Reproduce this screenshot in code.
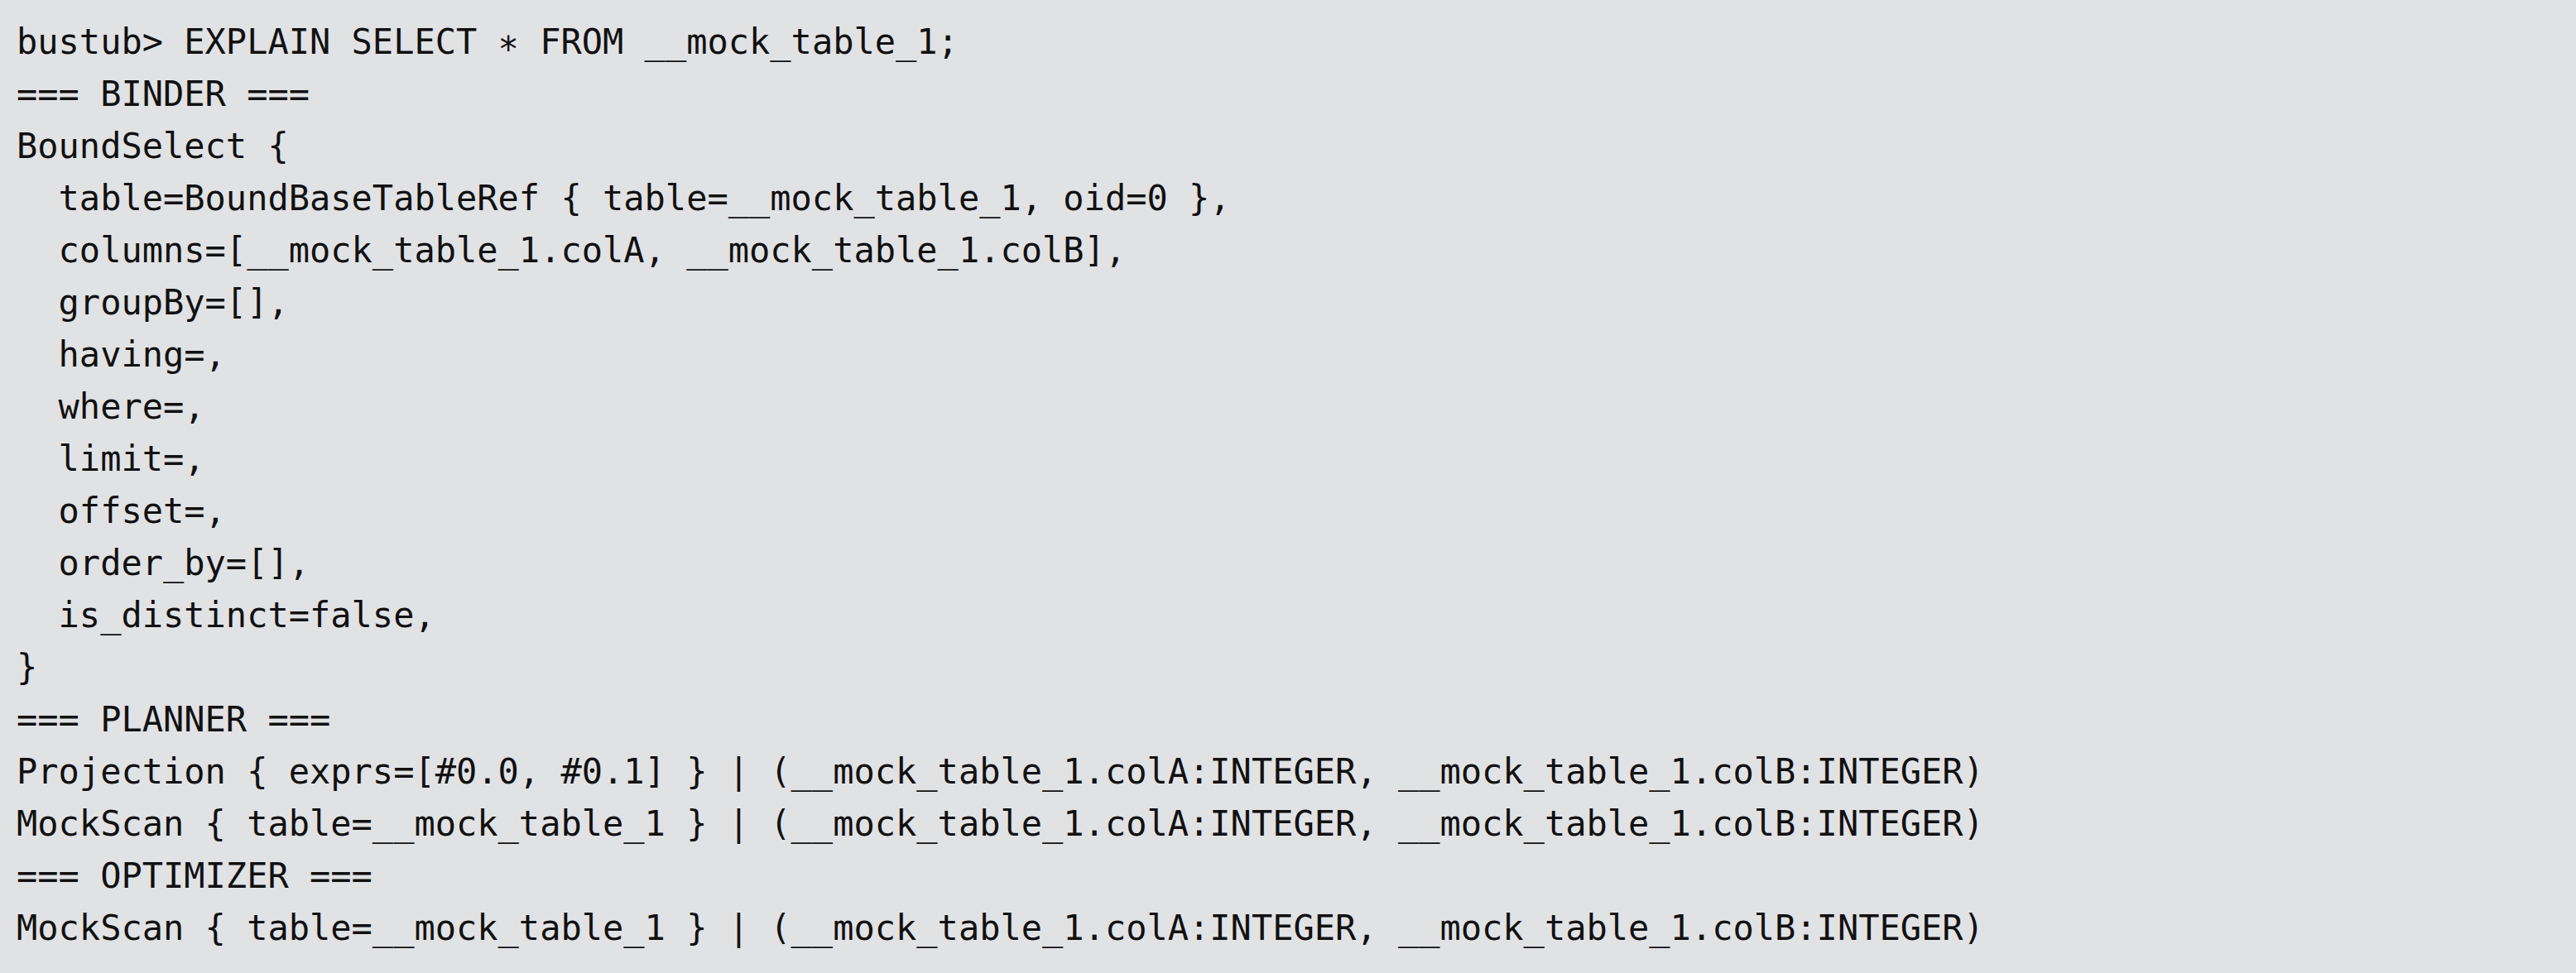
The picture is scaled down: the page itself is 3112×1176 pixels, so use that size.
import React from "react";

const lines = [
  "=== BINDER ===",
  "BoundSelect {",
  "  table=BoundBaseTableRef { table=__mock_table_1, oid=0 },",
  "  columns=[__mock_table_1.colA, __mock_table_1.colB],",
  "  groupBy=[],",
  "  having=,",
  "  where=,",
  "  limit=,",
  "  offset=,",
  "  order_by=[],",
  "  is_distinct=false,",
  "}",
  "=== PLANNER ===",
  "Projection { exprs=[#0.0, #0.1] } | (__mock_table_1.colA:INTEGER, __mock_table_1.colB:INTEGER)",
  "MockScan { table=__mock_table_1 } | (__mock_table_1.colA:INTEGER, __mock_table_1.colB:INTEGER)",
  "=== OPTIMIZER ===",
  "MockScan { table=__mock_table_1 } | (__mock_table_1.colA:INTEGER, __mock_table_1.colB:INTEGER)",
];

export default function App() {
  return (
    <div className="w-[3112px] h-[1176px] bg-[#e1e2e4] overflow-hidden pl-[20px] pt-[19px] text-[#111111] font-['DejaVu_Sans_Mono','Liberation_Mono',monospace] text-[42px] leading-[63px]">
      <div className="whitespace-pre">
        {"bustub> EXPLAIN SELECT "}
        <span className="align-[-9px] leading-none">*</span>
        {" FROM __mock_table_1;"}
      </div>
      {lines.map((l, i) => (
        <div key={i} className="whitespace-pre">
          {l}
        </div>
      ))}
    </div>
  );
}
